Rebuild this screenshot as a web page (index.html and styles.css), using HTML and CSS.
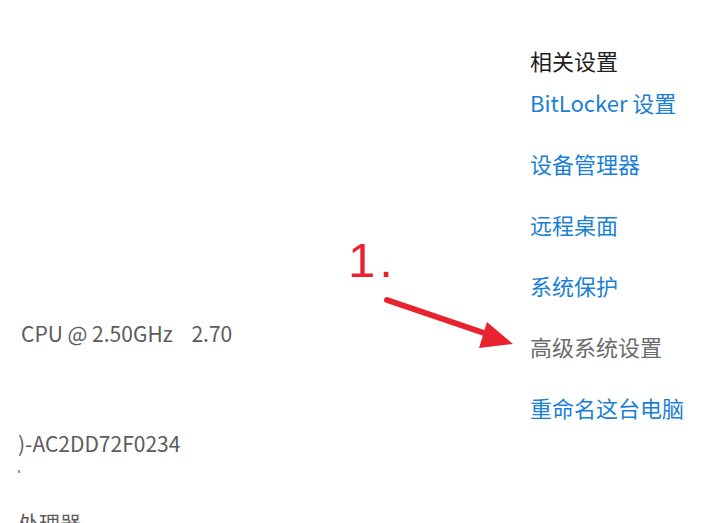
FILE: index.html
```html
<!DOCTYPE html>
<html lang="zh-CN">
<head>
<meta charset="utf-8">
<link rel="stylesheet" href="styles.css">
</head>
<body>
<div class="page">
  <section class="specs">
    <div class="spec-row spec-cpu">CPU @ 2.50GHz&nbsp;&nbsp;&nbsp; 2.70</div>
    <div class="spec-row spec-id">)-AC2DD72F0234</div>
    <div class="spec-row spec-mark"><span class="tick"></span></div>
    <div class="spec-row spec-type">处理器</div>
  </section>
  <aside class="related">
    <h2 class="related-title">相关设置</h2>
    <ul class="related-links">
      <li class="link">BitLocker 设置</li>
      <li class="link">设备管理器</li>
      <li class="link">远程桌面</li>
      <li class="link">系统保护</li>
      <li class="link link-muted">高级系统设置</li>
      <li class="link">重命名这台电脑</li>
    </ul>
  </aside>
  <div class="annotation">
    <span class="step">1<span class="dot">.</span></span>
    <svg class="arrow" width="140" height="60" viewBox="0 0 140 60">
      <line x1="7" y1="7" x2="104" y2="40" stroke="#e8232f" stroke-width="6" stroke-linecap="round"/>
      <polygon points="133,51 107,29 99,55" fill="#e8232f"/>
    </svg>
  </div>
</div>
</body>
</html>
```

FILE: styles.css
```css
html, body {
  margin: 0;
  padding: 0;
  background: #ffffff;
}
body {
  width: 722px;
  height: 523px;
  overflow: hidden;
  font-family: "Noto Sans CJK SC", "Noto Sans", sans-serif;
}
.page {
  position: relative;
  display: flex;
  height: 523px;
}
.specs {
  width: 512px;
  padding-left: 18px;
  padding-top: 318px;
  color: #5c5c5c;
  font-size: 21px;
}
.spec-row {
  line-height: 30px;
  white-space: nowrap;
}
.spec-cpu {
  padding-left: 3px;
}
.spec-id {
  margin-top: 80px;
}
.spec-mark {
  height: 40px;
  position: relative;
}
.tick {
  display: block;
  width: 2px;
  height: 3px;
  margin-top: 12px;
  background: #9a9a9a;
}
.spec-type {
  margin-top: -3px;
}
.related {
  flex: 1;
  padding-top: 45px;
}
.related-title {
  margin: 0;
  font-size: 22px;
  font-weight: 400;
  line-height: 30px;
  color: #1e1e1e;
}
.related-links {
  list-style: none;
  margin: 12px 0 0;
  padding: 0;
  display: flex;
  flex-direction: column;
  gap: 31px;
}
.link {
  font-size: 22px;
  line-height: 30px;
  color: #1a7fd6;
  white-space: nowrap;
}
.link-muted {
  color: #6b6b6b;
}
.annotation {
  position: absolute;
  left: 348px;
  top: 232px;
  width: 180px;
  height: 130px;
}
.step {
  position: absolute;
  left: 0;
  top: 0;
  font-family: "Liberation Sans", sans-serif;
  font-size: 49px;
  line-height: 56px;
  color: #e8232f;
}
.dot {
  margin-left: 4px;
}
.arrow {
  position: absolute;
  left: 32px;
  top: 61px;
}
```
